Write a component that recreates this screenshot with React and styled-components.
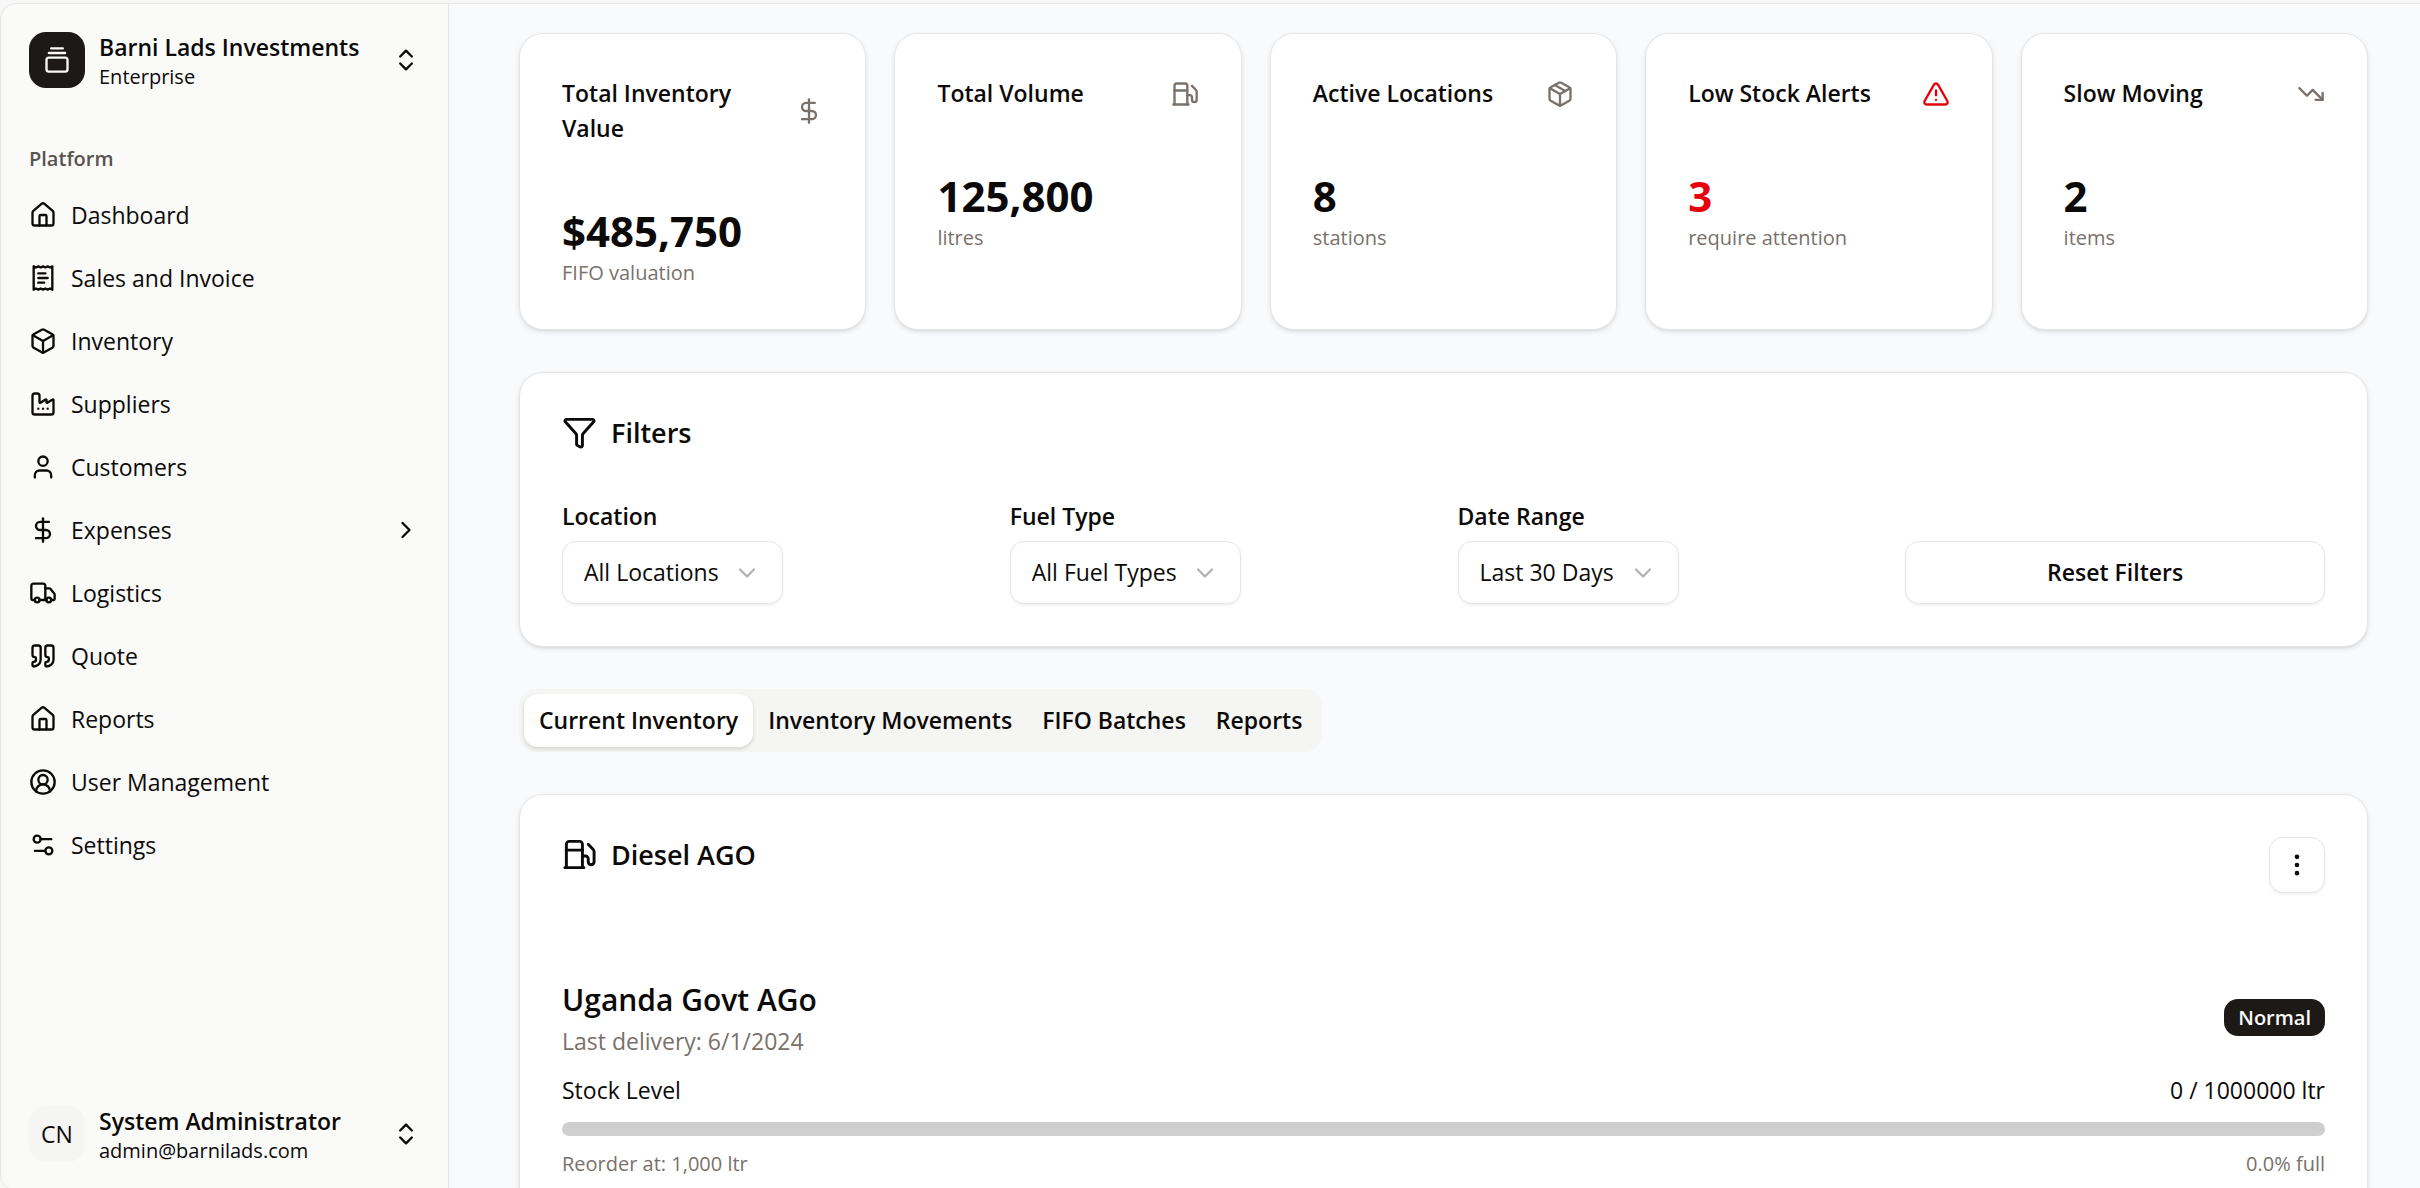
import React from "react";
import styled, { createGlobalStyle } from "styled-components";
import {
  Box, ChevronDown, ChevronRight, ChevronsUpDown, CircleUserRound, DollarSign,
  EllipsisVertical, Factory, Fuel, Funnel, GalleryVerticalEnd, House, Package,
  Quote, Settings2, TrendingDown, TriangleAlert, Truck, User,
} from "lucide-react";

const color = {
  ink: "#0c0a09",
  muted: "#79716b",
  label: "#57534f",
  border: "#e7e5e4",
  dark: "#1c1917",
  sidebar: "#fafaf9",
  soft: "#f5f5f4",
  page: "#f9fafb",
  red: "#e7000b",
};

const GlobalStyle = createGlobalStyle`
  * { box-sizing: border-box; }
  body {
    margin: 0;
    overflow: hidden;
    background: #f7f7f7;
    color: ${color.ink};
    font: 400 23px/35px "Open Sans", "Noto Sans", sans-serif;
  }
  button, select { font: inherit; color: inherit; }
  h1, h2, h3, p { margin: 0; }
  svg { flex-shrink: 0; display: block; }
`;

const Shell = styled.div`
  display: flex;
  height: calc(100vh + 3px);
  padding-top: 3px;
`;

const Sidebar = styled.aside`
  display: flex;
  flex-direction: column;
  flex: 0 0 449px;
  padding: 14px;
  background: ${color.sidebar};
  border: 1px solid ${color.border};
  border-radius: 16px 0 0 16px;
`;

const AccountButton = styled.button`
  display: flex;
  align-items: center;
  gap: 14px;
  width: 100%;
  padding: 12px 14px;
  border: 0;
  border-radius: 14px;
  background: none;
  text-align: left;
`;

const Tile = styled.span`
  display: grid;
  place-items: center;
  flex: 0 0 56px;
  height: 56px;
  border-radius: 17px;
  background: ${(p) => (p.$dark ? color.dark : color.soft)};
  color: ${(p) => (p.$dark ? "#fafaf9" : color.ink)};
`;

const AccountText = styled.span`
  flex: 1;
  display: grid;
`;

const AccountName = styled.span`
  font-weight: 600;
  line-height: 34px;
`;

const AccountNote = styled.span`
  font-size: 20px;
  line-height: 26px;
`;

const Nav = styled.nav`
  flex: 1;
  padding: 29px 0 0;
`;

const NavLabel = styled.h2`
  padding: 0 14px;
  color: ${color.label};
  font-size: 20px;
  font-weight: 600;
  line-height: 56px;
`;

const NavList = styled.ul`
  display: grid;
  gap: 7px;
  margin: 0;
  padding: 0;
  list-style: none;
`;

const NavLink = styled.a`
  display: flex;
  align-items: center;
  gap: 14px;
  height: 56px;
  padding: 0 14px;
  color: inherit;
  text-decoration: none;
`;

const NavText = styled.span`
  flex: 1;
`;

const Main = styled.main`
  flex: 1;
  min-width: 0;
  display: flex;
  flex-direction: column;
  gap: 42px;
  padding: 29px 52px 0 70px;
  background: ${color.page};
  border-top: 1px solid ${color.border};
  overflow: hidden;
`;

const Card = styled.section`
  flex-shrink: 0;
  padding: 42px;
  background: #fff;
  border: 1px solid ${color.border};
  border-radius: 24px;
  box-shadow: 0 2px 5px rgba(0, 0, 0, 0.1), 0 2px 3px -2px rgba(0, 0, 0, 0.1);
`;

const StatGrid = styled.div`
  display: grid;
  grid-template-columns: repeat(5, 1fr);
  gap: 28px;
`;

const StatHead = styled.div`
  display: flex;
  align-items: center;
  justify-content: space-between;
  gap: 14px;
  padding-bottom: 57px;
  color: ${(p) => (p.$alert ? color.red : color.muted)};
`;

const StatTitle = styled.h3`
  color: ${color.ink};
  font-size: 23px;
  font-weight: 600;
`;

const StatValue = styled.p`
  color: ${(p) => (p.$alert ? color.red : color.ink)};
  font-size: 42px;
  font-weight: 700;
  line-height: 56px;
`;

const Small = styled.p`
  color: ${color.muted};
  font-size: 20px;
  line-height: 28px;
`;

const CardTitle = styled.h2`
  display: flex;
  align-items: center;
  gap: 14px;
  font-size: 27px;
  font-weight: 600;
`;

const FilterGrid = styled.div`
  display: grid;
  grid-template-columns: repeat(4, 1fr);
  align-items: end;
  gap: 28px;
  padding-top: 49px;
`;

const Field = styled.div`
  display: grid;
  justify-items: start;
  gap: 7px;
`;

const FieldLabel = styled.label`
  font-weight: 600;
`;

const SelectBox = styled.div`
  position: relative;
  svg {
    position: absolute;
    top: 18px;
    right: 22px;
    color: #b5b3b1;
    pointer-events: none;
  }
`;

const Select = styled.select`
  appearance: none;
  height: 63px;
  padding: 0 63px 0 21px;
  border: 1px solid ${color.border};
  border-radius: 14px;
  background: #fff;
  box-shadow: 0 2px 3px rgba(0, 0, 0, 0.05);
`;

const OutlineButton = styled.button`
  display: grid;
  place-items: center;
  width: ${(p) => (p.$square ? "56px" : "100%")};
  height: ${(p) => (p.$square ? "56px" : "63px")};
  padding: 0;
  border: 1px solid ${color.border};
  border-radius: 14px;
  background: #fff;
  font-weight: 600;
  box-shadow: 0 2px 3px rgba(0, 0, 0, 0.05);
`;

const Tabs = styled.div`
  display: flex;
  align-self: flex-start;
  flex-shrink: 0;
  height: 63px;
  padding: 5px;
  border-radius: 17px;
  background: ${color.soft};
`;

const Tab = styled.button`
  padding: 0 15px;
  border: 0;
  border-radius: 14px;
  background: ${(p) => (p.$active ? "#fff" : "none")};
  box-shadow: ${(p) => (p.$active ? "0 2px 4px rgba(0, 0, 0, 0.14)" : "none")};
  font-weight: 600;
`;

const Between = styled.div`
  display: flex;
  justify-content: space-between;
  align-items: ${(p) => p.$align || "center"};
`;

const Product = styled.div`
  display: grid;
  gap: 14px;
  padding-top: 82px;
`;

const ProductName = styled.h3`
  font-size: 30px;
  font-weight: 600;
  line-height: 49px;
`;

const Muted = styled.p`
  color: ${color.muted};
`;

const Badge = styled.span`
  padding: 4px 14px;
  border-radius: 14px;
  background: ${color.dark};
  color: #fafaf9;
  font-size: 20px;
  font-weight: 600;
  line-height: 29px;
`;

const Track = styled.div`
  height: 14px;
  border-radius: 7px;
  background: #cfcfcf;
  overflow: hidden;
`;

const Fill = styled.div`
  height: 100%;
  background: ${color.dark};
`;

function ReceiptLines({ size }) {
  return (
    <svg width={size} height={size} viewBox="0 0 24 24" fill="none" stroke="currentColor"
      strokeWidth="2" strokeLinecap="round" strokeLinejoin="round" aria-hidden="true">
      <path d="M4 2v20l2-1 2 1 2-1 2 1 2-1 2 1 2-1 2 1V2l-2 1-2-1-2 1-2-1-2 1-2-1-2 1Z" />
      <path d="M14 8H8" />
      <path d="M16 12H8" />
      <path d="M13 16H8" />
    </svg>
  );
}

const navItems = [
  ["Dashboard", House],
  ["Sales and Invoice", ReceiptLines],
  ["Inventory", Box],
  ["Suppliers", Factory],
  ["Customers", User],
  ["Expenses", DollarSign, true],
  ["Logistics", Truck],
  ["Quote", Quote],
  ["Reports", House],
  ["User Management", CircleUserRound],
  ["Settings", Settings2],
];

const stats = [
  { title: "Total Inventory Value", value: "$485,750", note: "FIFO valuation", icon: DollarSign },
  { title: "Total Volume", value: "125,800", note: "litres", icon: Fuel },
  { title: "Active Locations", value: "8", note: "stations", icon: Package },
  { title: "Low Stock Alerts", value: "3", note: "require attention", icon: TriangleAlert, alert: true },
  { title: "Slow Moving", value: "2", note: "items", icon: TrendingDown },
];

const filters = [
  ["location", "Location", "All Locations"],
  ["fuel", "Fuel Type", "All Fuel Types"],
  ["range", "Date Range", "Last 30 Days"],
];

const tabs = ["Current Inventory", "Inventory Movements", "FIFO Batches", "Reports"];

function Account({ tile, dark, name, note }) {
  return (
    <AccountButton type="button">
      <Tile $dark={dark}>{tile}</Tile>
      <AccountText>
        <AccountName>{name}</AccountName>
        <AccountNote>{note}</AccountNote>
      </AccountText>
      <ChevronsUpDown size={28} />
    </AccountButton>
  );
}

export default function App() {
  const stock = { level: 0, capacity: 1000000 };
  const percent = (stock.level / stock.capacity) * 100;

  return (
    <>
      <GlobalStyle />
      <Shell>
        <Sidebar>
          <Account
            dark
            tile={<GalleryVerticalEnd size={28} />}
            name="Barni Lads Investments"
            note="Enterprise"
          />
          <Nav aria-label="Platform">
            <NavLabel>Platform</NavLabel>
            <NavList>
              {navItems.map(([label, Icon, nested]) => (
                <li key={label}>
                  <NavLink href="#">
                    <Icon size={28} />
                    <NavText>{label}</NavText>
                    {nested && <ChevronRight size={28} />}
                  </NavLink>
                </li>
              ))}
            </NavList>
          </Nav>
          <Account tile="CN" name="System Administrator" note="admin@barnilads.com" />
        </Sidebar>

        <Main>
          <StatGrid>
            {stats.map(({ title, value, note, icon: Icon, alert }) => (
              <Card key={title}>
                <StatHead $alert={alert}>
                  <StatTitle>{title}</StatTitle>
                  <Icon size={28} />
                </StatHead>
                <StatValue $alert={alert}>{value}</StatValue>
                <Small>{note}</Small>
              </Card>
            ))}
          </StatGrid>

          <Card>
            <CardTitle><Funnel size={35} />Filters</CardTitle>
            <FilterGrid>
              {filters.map(([id, label, option]) => (
                <Field key={id}>
                  <FieldLabel htmlFor={id}>{label}</FieldLabel>
                  <SelectBox>
                    <Select id={id}><option>{option}</option></Select>
                    <ChevronDown size={28} />
                  </SelectBox>
                </Field>
              ))}
              <OutlineButton type="button">Reset Filters</OutlineButton>
            </FilterGrid>
          </Card>

          <Tabs role="tablist">
            {tabs.map((label, i) => (
              <Tab key={label} type="button" role="tab" aria-selected={i === 0} $active={i === 0}>
                {label}
              </Tab>
            ))}
          </Tabs>

          <Card>
            <Between $align="flex-start">
              <CardTitle><Fuel size={35} />Diesel AGO</CardTitle>
              <OutlineButton type="button" $square aria-label="More actions">
                <EllipsisVertical size={28} />
              </OutlineButton>
            </Between>
            <Product>
              <Between>
                <div>
                  <ProductName>Uganda Govt AGo</ProductName>
                  <Muted>Last delivery: 6/1/2024</Muted>
                </div>
                <Badge>Normal</Badge>
              </Between>
              <Between>
                <span>Stock Level</span>
                <span>{stock.level} / {stock.capacity} ltr</span>
              </Between>
              <Track><Fill style={{ width: `${percent}%` }} /></Track>
              <Between>
                <Small>Reorder at: 1,000 ltr</Small>
                <Small>{percent.toFixed(1)}% full</Small>
              </Between>
            </Product>
          </Card>
        </Main>
      </Shell>
    </>
  );
}
